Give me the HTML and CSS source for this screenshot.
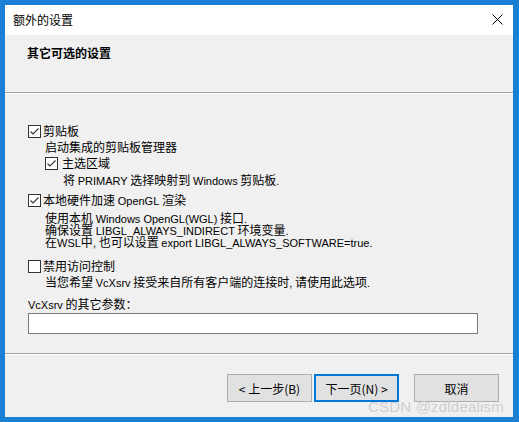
FILE: index.html
```html
<!DOCTYPE html>
<html lang="zh-CN">
<head>
<meta charset="utf-8">
<title>额外的设置</title>
<link rel="stylesheet" href="styles.css">
</head>
<body>
<div class="dialog">
  <div class="titlebar">
    <span class="title">额外的设置</span>
    <svg class="close" width="11" height="11" viewBox="0 0 11 11"><path d="M0.5 0.5 L10.5 10.5 M10.5 0.5 L0.5 10.5" stroke="#000" stroke-width="1" fill="none"/></svg>
  </div>
  <div class="header">
    <div class="heading">其它可选的设置</div>
  </div>
  <div class="content">
    <div class="row r1"><span class="cb checked"><svg width="11" height="11" viewBox="0 0 11 11"><path d="M1.5 5.5 L4 8 L9.5 2.5" stroke="#333" stroke-width="1.1" fill="none"/></svg></span><span>剪贴板</span></div>
    <div class="desc d1">启动集成的剪贴板管理器</div>
    <div class="row r2 sub"><span class="cb checked"><svg width="11" height="11" viewBox="0 0 11 11"><path d="M1.5 5.5 L4 8 L9.5 2.5" stroke="#333" stroke-width="1.1" fill="none"/></svg></span><span>主选区域</span></div>
    <div class="desc d2 sub2">将 <span class="l">PRIMARY</span> 选择映射到 <span class="l">Windows</span> 剪贴板<span class="l">.</span></div>
    <div class="row r3"><span class="cb checked"><svg width="11" height="11" viewBox="0 0 11 11"><path d="M1.5 5.5 L4 8 L9.5 2.5" stroke="#333" stroke-width="1.1" fill="none"/></svg></span><span>本地硬件加速 <span class="l">OpenGL</span> 渲染</span></div>
    <div class="desc d3">
      <div>使用本机 <span class="l">Windows OpenGL(WGL)</span> 接口<span class="l">.</span></div>
      <div>确保设置 <span class="l">LIBGL_ALWAYS_INDIRECT</span> 环境变量<span class="l">.</span></div>
      <div>在<span class="l">WSL</span>中<span class="l">,</span> 也可以设置 <span class="l">export LIBGL_ALWAYS_SOFTWARE=true.</span></div>
    </div>
    <div class="row r4"><span class="cb"></span><span>禁用访问控制</span></div>
    <div class="desc d4">当您希望 <span class="l">VcXsrv</span> 接受来自所有客户端的连接时<span class="l">,</span> 请使用此选项<span class="l">.</span></div>
    <div class="label"><span class="l">VcXsrv</span> 的其它参数：</div>
    <div class="input"></div>
  </div>
  <div class="footer">
    <button class="btn">&lt; 上一步(B)</button>
    <button class="btn default">下一页(N) &gt;</button>
    <button class="btn cancel">取消</button>
  </div>
</div>
<div class="watermark">CSDN @zdldealism</div>
</body>
</html>
```

FILE: styles.css
```css
html, body {
  margin: 0;
  padding: 0;
}
body {
  width: 519px;
  height: 422px;
  background: #1a80d6;
  position: relative;
  overflow: hidden;
  font-family: "Noto Sans CJK SC", "Liberation Sans", sans-serif;
  font-size: 12px;
  color: #000;
}
.l {
  font-family: "Liberation Sans", "Noto Sans CJK SC", sans-serif;
  font-size: 11px;
}
.dialog {
  position: absolute;
  left: 5px;
  top: 5px;
  width: 508px;
  height: 412px;
  background: #f0f0f0;
  display: flex;
  flex-direction: column;
}
.titlebar {
  height: 30px;
  background: #fff;
  display: flex;
  align-items: center;
  justify-content: space-between;
  padding: 0 10px 0 8px;
  flex: none;
}
.title {
  line-height: 14px;
}
.close {
  display: block;
  margin-top: -1px;
}
.header {
  height: 58px;
  flex: none;
  border-bottom: 1px solid #a0a0a0;
  box-shadow: 0 1px 0 #fff;
  padding: 11px 0 0 22px;
  box-sizing: border-box;
}
.heading {
  font-weight: bold;
  line-height: 14px;
}
.content {
  height: 261px;
  flex: none;
  box-sizing: border-box;
  padding: 30px 0 0 23px;
  border-bottom: 1px solid #a0a0a0;
}
.row {
  display: flex;
  align-items: center;
  height: 16px;
  line-height: 16px;
}
.cb {
  width: 11px;
  height: 11px;
  border: 1px solid #333;
  background: #fff;
  margin-right: 2px;
  display: flex;
  align-items: center;
  justify-content: center;
  flex: none;
}
.cb svg { display: block; }
.desc {
  line-height: 14px;
  padding-left: 17px;
}
.d1 { margin-top: 1px; }
.r2 { margin-top: 1px; padding-left: 17px; }
.r2 .cb { margin-right: 4px; }
.d2 { margin-top: 2px; padding-left: 35px; }
.r3 { margin-top: 4px; }
.d3 { margin-top: 4px; }
.d3 > div { line-height: 12px; height: 12px; }
.r4 { margin-top: 10px; }
.d4 { margin-top: 1px; }
.label {
  margin-top: 7px;
  line-height: 14px;
}
.input {
  margin-top: 1px;
  width: 448px;
  height: 19px;
  background: #fff;
  border: 1px solid #7a7a7a;
}
.footer {
  flex: 1;
  display: flex;
  justify-content: flex-end;
  align-items: flex-start;
  padding: 19px 14px 0 0;
  border-top: 1px solid #fff;
}
.btn {
  width: 85px;
  height: 28px;
  background: #e1e1e1;
  border: 1px solid #adadad;
  font-family: "Noto Sans CJK SC", "Liberation Sans", sans-serif;
  font-size: 12px;
  color: #000;
  padding: 0;
  margin: 0;
}
.btn.default {
  border: 2px solid #0078d7;
  margin-left: 2px;
}
.btn.cancel {
  margin-left: 15px;
}
.watermark {
  position: absolute;
  left: 368px;
  top: 398px;
  font-family: "Liberation Sans", sans-serif;
  font-size: 15px;
  color: rgba(200, 200, 200, 0.85);
  letter-spacing: 0.2px;
}
```
